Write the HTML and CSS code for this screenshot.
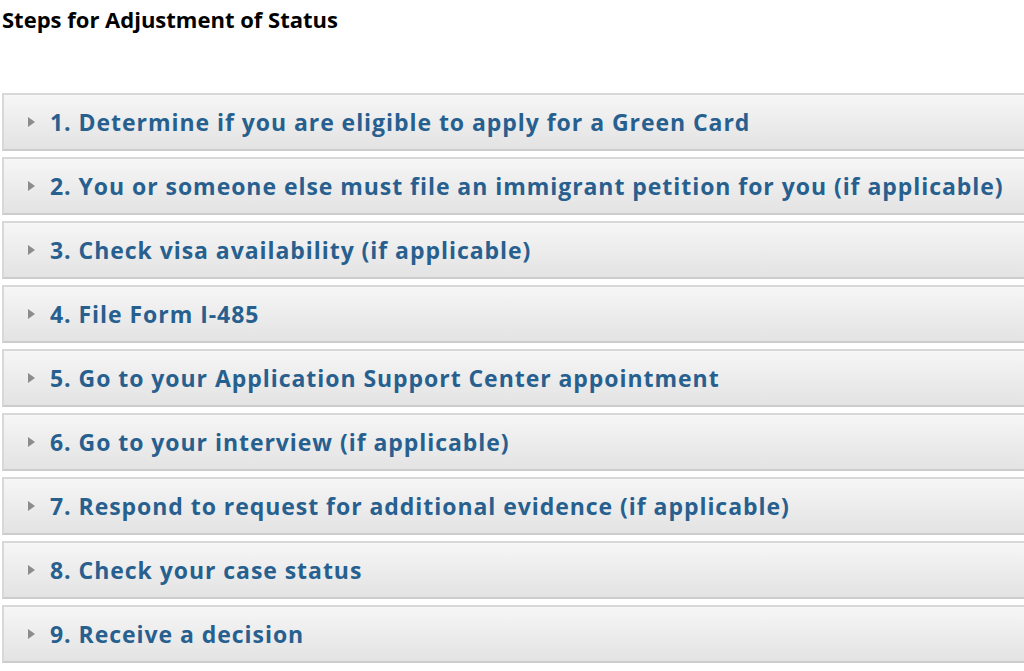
FILE: index.html
```html
<!DOCTYPE html>
<html lang="en">

<head>
    <meta charset="UTF-8">
    <meta name="viewport" content="width=device-width, initial-scale=1.0">
    <title>Steps for Adjustment of Status</title>
    <link rel="stylesheet" href="styles.css">
</head>

<body>
    <div class="page">
        <h2 class="steps-title">Steps for Adjustment of Status</h2>

        <div class="steps-list">
            <div class="step"><span class="step-arrow"></span><span class="step-label">1. Determine if you are eligible to apply for a Green Card</span></div>
            <div class="step"><span class="step-arrow"></span><span class="step-label">2. You or someone else must file an immigrant petition for you (if applicable)</span></div>
            <div class="step"><span class="step-arrow"></span><span class="step-label">3. Check visa availability (if applicable)</span></div>
            <div class="step"><span class="step-arrow"></span><span class="step-label">4. File Form I-485</span></div>
            <div class="step"><span class="step-arrow"></span><span class="step-label">5. Go to your Application Support Center appointment</span></div>
            <div class="step"><span class="step-arrow"></span><span class="step-label">6. Go to your interview (if applicable)</span></div>
            <div class="step"><span class="step-arrow"></span><span class="step-label">7. Respond to request for additional evidence (if applicable)</span></div>
            <div class="step"><span class="step-arrow"></span><span class="step-label">8. Check your case status</span></div>
            <div class="step"><span class="step-arrow"></span><span class="step-label">9. Receive a decision</span></div>
        </div>
    </div>
</body>

</html>
```

FILE: styles.css
```css
body {
    margin: 0;
    background-color: #fff;
    font-family: 'Open Sans', 'Noto Sans', sans-serif;
    overflow: hidden;
}

.page {
    padding-top: 5px;
}

.steps-title {
    margin: 0 0 60px 2px;
    font-size: 22px;
    font-weight: 700;
    line-height: 28px;
    color: #000;
}

.steps-list {
    display: flex;
    flex-direction: column;
    gap: 6px;
    margin-left: 2px;
    width: 1060px; /* panels run past the right edge */
}

.step {
    display: flex;
    align-items: center;
    height: 54px;
    border: 2px solid #d8d8d8;
    border-bottom-color: #cccccc;
    background: linear-gradient(to bottom, #f6f6f6, #e3e3e3);
    padding-left: 24px;
}

.step-arrow {
    width: 0;
    height: 0;
    border-top: 5px solid transparent;
    border-bottom: 5px solid transparent;
    border-left: 7px solid #8c8c8c;
    margin-right: 15px;
}

.step-label {
    font-size: 23px;
    font-weight: 700;
    color: #27608f;
    letter-spacing: 0.95px;
    white-space: nowrap;
}
```
